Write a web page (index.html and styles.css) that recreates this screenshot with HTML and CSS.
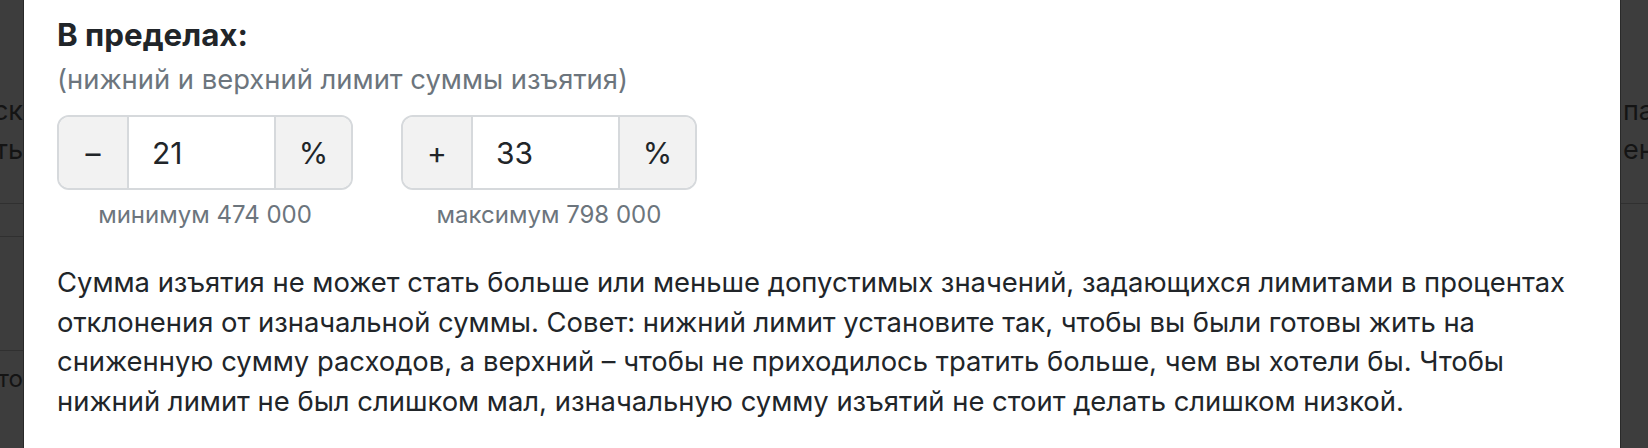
FILE: index.html
```html
<!DOCTYPE html>
<html lang="ru">
<head>
<meta charset="utf-8">
<title>Лимиты изъятия</title>
<link rel="stylesheet" href="styles.css">
</head>
<body>
<div class="screen">
  <aside class="side side-left">
    <div class="bg-row bg-row-a"><div class="bg-text">Допустимый риск<br>учитывать</div></div>
    <div class="bg-row bg-row-b"></div>
    <div class="bg-row bg-row-c"></div>
    <div class="bg-row bg-row-d"><div class="bg-text bg-small">Авто</div></div>
  </aside>

  <main class="modal">
    <h3 class="title">В пределах:</h3>
    <p class="subtitle">(нижний и верхний лимит суммы изъятия)</p>

    <div class="limits">
      <div class="limit">
        <div class="input-group">
          <span class="addon addon-prepend">–</span>
          <input class="field" type="text" value="21" aria-label="Нижний лимит, %">
          <span class="addon addon-append">%</span>
        </div>
        <div class="hint">минимум 474 000</div>
      </div>
      <div class="limit">
        <div class="input-group">
          <span class="addon addon-prepend">+</span>
          <input class="field" type="text" value="33" aria-label="Верхний лимит, %">
          <span class="addon addon-append">%</span>
        </div>
        <div class="hint">максимум 798 000</div>
      </div>
    </div>

    <p class="note">Сумма изъятия не может стать больше или меньше допустимых значений, задающихся лимитами в процентах отклонения от изначальной суммы. Совет: нижний лимит установите так, чтобы вы были готовы жить на<br>сниженную сумму расходов, а верхний – чтобы не приходилось тратить больше, чем вы хотели бы. Чтобы нижний лимит не был слишком мал, изначальную сумму изъятий не стоит делать слишком низкой.</p>
  </main>

  <aside class="side side-right">
    <div class="bg-row bg-row-a"><div class="bg-text">пары<br>енение</div></div>
  </aside>
</div>
</body>
</html>
```
FILE: styles.css
```css
* { box-sizing: border-box; }

html, body {
  margin: 0;
  padding: 0;
}

body {
  font-family: Inter, "Noto Sans", sans-serif;
  color: #212529;
  background: #3d3d3d;
}

.screen {
  display: flex;
  height: 448px;
  overflow: hidden;
}

/* dimmed page behind the modal */
.side {
  flex: none;
  overflow: hidden;
  background: #3d3d3d;
  color: #141414;
  font-size: 27px;
  line-height: 39px;
}
.side-left { width: 23px; }
.side-right { width: 27px; }

.bg-row {
  display: flex;
  border-bottom: 1px solid #303030;
  white-space: nowrap;
}
.side-left .bg-row { justify-content: flex-end; }
.bg-text { flex: none; }
.side-left .bg-text { text-align: right; }

.bg-row-a { height: 204px; padding-top: 91px; }
.bg-row-b { height: 33px; }
.bg-row-c { height: 114px; }
.bg-row-d { border-bottom: 0; padding-top: 8px; }
.bg-small { font-size: 24px; }
.side-right .bg-text { padding-left: 2px; }

/* modal */
.modal {
  flex: none;
  width: 1598px;
  background: #fff;
  border-left: 1px solid #2a2a2a;
  border-right: 1px solid #2a2a2a;
  padding: 15px 33px 0 33px;
}

.title {
  margin: 0;
  font-size: 31.3px;
  line-height: 40px;
  font-weight: 700;
  color: #212529;
}

.subtitle {
  margin: 4px 0 0;
  font-size: 27.4px;
  line-height: 40px;
  color: #6c757d;
}

.limits {
  display: flex;
  gap: 48px;
  margin-top: 16px;
}

.limit {
  display: flex;
  flex-direction: column;
  align-items: center;
  width: 296px;
}

.input-group {
  display: flex;
  width: 296px;
  height: 75px;
  border: 2px solid #d6d9dc;
  border-radius: 12px;
  overflow: hidden;
}

.addon {
  display: flex;
  align-items: center;
  justify-content: center;
  background: #f2f2f2;
  font-size: 30px;
  color: #212529;
}
.addon-prepend {
  width: 70px;
  border-right: 2px solid #d6d9dc;
}
.addon-append {
  width: 77px;
  border-left: 2px solid #d6d9dc;
}

.field {
  width: 145px;
  flex: none;
  border: 0;
  outline: 0;
  margin: 0;
  padding: 0 0 0 23px;
  background: #fff;
  font-family: inherit;
  font-size: 30px;
  color: #212529;
}

.hint {
  margin-top: 8px;
  font-size: 24px;
  line-height: 34px;
  color: #6c757d;
  white-space: nowrap;
}

.note {
  margin: 31px 0 0;
  font-size: 27.4px;
  line-height: 39.6px;
  color: #212529;
}
```
